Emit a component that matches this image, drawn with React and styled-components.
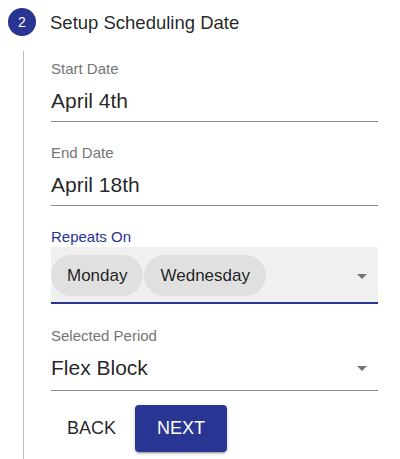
import React from "react";
import styled, { createGlobalStyle } from "styled-components";

const GlobalStyle = createGlobalStyle`
  html, body {
    margin: 0;
    padding: 0;
    background: #ffffff;
    overflow: hidden;
  }
  body {
    font-family: "Liberation Sans", Arial, Helvetica, sans-serif;
    color: rgba(0, 0, 0, 0.87);
  }
`;

const Page = styled.div`
  padding: 6px 0 0 8px;
  width: 400px;
  height: 459px;
  box-sizing: border-box;
  display: flex;
  flex-direction: column;
`;

const StepHeader = styled.div`
  display: flex;
  align-items: center;
  gap: 14px;
`;

const StepCircle = styled.div`
  width: 28px;
  height: 28px;
  border-radius: 50%;
  background: #283593;
  color: #ffffff;
  font-size: 14px;
  display: flex;
  align-items: center;
  justify-content: center;
`;

const StepTitle = styled.div`
  font-size: 18.5px;
  line-height: 28px;
  padding-top: 3px;
  color: rgba(0, 0, 0, 0.87);
`;

const StepContent = styled.div`
  flex: 1;
  margin: 14px 0 0 15px;
  border-left: 1px solid #bdbdbd;
  padding: 9px 22px 0 27px;
  display: flex;
  flex-direction: column;
`;

const Field = styled.div`
  display: flex;
  flex-direction: column;
  margin-bottom: ${(p) => p.$gap || 22}px;
`;

const Label = styled.div`
  font-size: 15px;
  line-height: 18px;
  color: ${(p) => (p.$focused ? "#283593" : "#757575")};
`;

const Value = styled.div`
  margin-top: 9px;
  font-size: 21px;
  line-height: 28px;
  padding-bottom: ${(p) => p.$pad || 6}px;
  border-bottom: 1px solid #8e8e8e;
  display: flex;
  align-items: center;
  justify-content: space-between;
`;

const FilledSelect = styled.div`
  margin-top: 1px;
  background: #f0f0f0;
  padding: 8px 0 6px 0;
  border-bottom: 2px solid #283593;
  display: flex;
  align-items: center;
  justify-content: space-between;
`;

const Chips = styled.div`
  display: flex;
  gap: 1px;
`;

const Chip = styled.div`
  height: 41px;
  border-radius: 21px;
  background: #e0e0e0;
  padding: 0 16px;
  font-size: 17px;
  display: flex;
  align-items: center;
  color: rgba(0, 0, 0, 0.87);
`;

const Arrow = styled.svg`
  width: 24px;
  height: 24px;
  margin-right: 4px;
  fill: #757575;
  flex: none;
`;

const Actions = styled.div`
  display: flex;
  gap: 3px;
  margin-top: -8px;
`;

const TextButton = styled.button`
  height: 47px;
  padding: 0 16px;
  border: none;
  background: transparent;
  font-family: inherit;
  font-size: 18px;
  color: rgba(0, 0, 0, 0.87);
  cursor: pointer;
`;

const PrimaryButton = styled.button`
  height: 47px;
  padding: 0 22px;
  border: none;
  border-radius: 4px;
  background: #283593;
  color: #ffffff;
  font-family: inherit;
  font-size: 18px;
  cursor: pointer;
  box-shadow: 0 3px 1px -2px rgba(0, 0, 0, 0.2), 0 2px 2px 0 rgba(0, 0, 0, 0.14),
    0 1px 5px 0 rgba(0, 0, 0, 0.12);
`;

function DropArrow() {
  return (
    <Arrow viewBox="0 0 24 24">
      <path d="M7 10l5 5 5-5z" />
    </Arrow>
  );
}

export default function App() {
  return (
    <>
      <GlobalStyle />
      <Page>
        <StepHeader>
          <StepCircle>2</StepCircle>
          <StepTitle>Setup Scheduling Date</StepTitle>
        </StepHeader>
        <StepContent>
          <Field>
            <Label>Start Date</Label>
            <Value>April 4th</Value>
          </Field>
          <Field>
            <Label>End Date</Label>
            <Value>April 18th</Value>
          </Field>
          <Field $gap={23}>
            <Label $focused>Repeats On</Label>
            <FilledSelect>
              <Chips>
                <Chip>Monday</Chip>
                <Chip>Wednesday</Chip>
              </Chips>
              <DropArrow />
            </FilledSelect>
          </Field>
          <Field>
            <Label>Selected Period</Label>
            <Value $pad={8}>
              Flex Block
              <DropArrow />
            </Value>
          </Field>
          <Actions>
            <TextButton>BACK</TextButton>
            <PrimaryButton>NEXT</PrimaryButton>
          </Actions>
        </StepContent>
      </Page>
    </>
  );
}
